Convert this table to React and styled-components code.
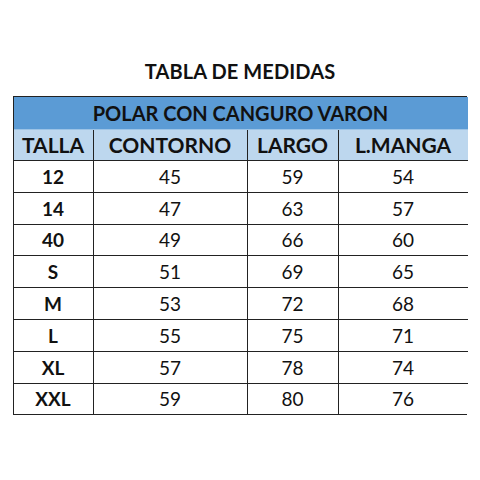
import React from 'react';
import styled, { createGlobalStyle } from 'styled-components';

const GlobalStyle = createGlobalStyle`
	html, body {
		margin: 0;
		padding: 0;
		background: #fff;
	}
	body {
		font-family: Lato, "Open Sans", sans-serif;
		color: #111;
	}
`;

const Page = styled.div`
	width: 480px;
	height: 480px;
	display: flex;
	flex-direction: column;
	align-items: center;
	padding-top: 61px;
	box-sizing: border-box;
`;

const Title = styled.h1`
	margin: 0 0 14px 0;
	font-size: 20px;
	font-weight: 700;
	line-height: 21px;
	letter-spacing: 0.1px;
`;

const Table = styled.div`
	width: 454px;
	display: grid;
	grid-template-columns: 80px 154px 91px 129px;
	border: 1.5px solid #222;
	box-sizing: border-box;
	margin-right: 1px;
`;

const Banner = styled.div`
	grid-column: 1 / -1;
	height: 31.5px;
	background: #5b9bd5;
	display: flex;
	align-items: center;
	justify-content: center;
	font-size: 20px;
	font-weight: 700;
	border-bottom: 1px solid #9cc3e6;
`;

const Cell = styled.div`
	height: ${({ head }) => (head ? '30.5px' : '30.8px')};
	display: flex;
	align-items: center;
	justify-content: center;
	font-size: ${({ head }) => (head ? '21px' : '19px')};
	font-weight: ${({ bold }) => (bold ? 700 : 400)};
	background: ${({ head }) => (head ? '#bdd7ee' : '#fff')};
	border-right: ${({ last }) => (last ? 'none' : '1.5px solid #222')};
	border-bottom: ${({ end }) => (end ? 'none' : '1.5px solid #222')};
	box-sizing: content-box;
`;

const headers = ['TALLA', 'CONTORNO', 'LARGO', 'L.MANGA'];

const rows = [
	['12', '45', '59', '54'],
	['14', '47', '63', '57'],
	['40', '49', '66', '60'],
	['S', '51', '69', '65'],
	['M', '53', '72', '68'],
	['L', '55', '75', '71'],
	['XL', '57', '78', '74'],
	['XXL', '59', '80', '76'],
];

export default function App() {
	return (
		<Page>
			<GlobalStyle />
			<Title>TABLA DE MEDIDAS</Title>
			<Table>
				<Banner>POLAR CON CANGURO VARON</Banner>
				{headers.map((h, i) => (
					<Cell key={h} head bold last={i === 3}>{h}</Cell>
				))}
				{rows.map((row, r) =>
					row.map((v, i) => (
						<Cell
							key={r + '-' + i}
							bold={i === 0}
							last={i === 3}
							end={r === rows.length - 1}
						>
							{v}
						</Cell>
					))
				)}
			</Table>
		</Page>
	);
}
